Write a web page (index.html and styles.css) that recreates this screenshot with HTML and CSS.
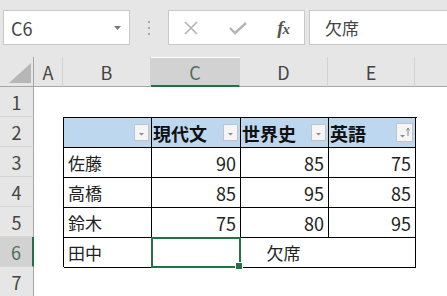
FILE: index.html
```html
<!DOCTYPE html>
<html lang="ja">
<head>
  <meta charset="UTF-8" />
  <meta name="viewport" content="width=device-width, initial-scale=1.0">
  <title>成績表</title>
  <link rel="stylesheet" href="styles.css">
</head>
<body>
  <div class="formula-bar">
    <div class="name-box">
      <span>C6</span>
      <svg class="caret" width="7" height="4" viewBox="0 0 7 4"><path d="M0 0h7L3.5 4z" fill="#7a7a7a"/></svg>
    </div>
    <div class="grip"><i></i><i></i><i></i></div>
    <div class="fx-buttons">
      <svg width="16" height="16" viewBox="0 0 16 16"><path d="M2 2l12 12M14 2L2 14" stroke="#b4b4b4" stroke-width="1.6" fill="none"/></svg>
      <svg width="18" height="16" viewBox="0 0 18 16"><path d="M1 8l5 5L17 3" stroke="#b4b4b4" stroke-width="2.4" fill="none"/></svg>
      <span class="fx">f<small>x</small></span>
    </div>
    <div class="formula-input">欠席</div>
  </div>

  <div class="sheet">
    <div class="corner"><div class="tri"></div></div>
    <div class="col-head">A</div>
    <div class="col-head">B</div>
    <div class="col-head active">C</div>
    <div class="col-head">D</div>
    <div class="col-head">E</div>
    <div class="col-head blank"></div>

    <div class="row-head">1</div>
    <div class="row-head">2</div>
    <div class="row-head">3</div>
    <div class="row-head">4</div>
    <div class="row-head">5</div>
    <div class="row-head active">6</div>
    <div class="row-head">7</div>

    <div class="scores">
      <div class="cell th"><span></span><span class="filter"><svg width="15" height="17" viewBox="0 0 15 17"><path d="M5 9h5l-2.5 2.5z" fill="#8a8a8a"/></svg></span></div>
      <div class="cell th"><span>現代文</span><span class="filter"><svg width="15" height="17" viewBox="0 0 15 17"><path d="M5 9h5l-2.5 2.5z" fill="#8a8a8a"/></svg></span></div>
      <div class="cell th"><span>世界史</span><span class="filter"><svg width="15" height="17" viewBox="0 0 15 17"><path d="M5 9h5l-2.5 2.5z" fill="#8a8a8a"/></svg></span></div>
      <div class="cell th"><span>英語</span><span class="filter sorted"><svg width="17" height="19" viewBox="0 0 17 19"><path d="M4 12h5l-2.5 2.5z" fill="#8a8a8a"/><path d="M12 13V5M10.5 7.5L12 5l1.5 2.5" stroke="#8a8a8a" stroke-width="1" fill="none"/></svg></span></div>

      <div class="cell">佐藤</div>
      <div class="cell num">90</div>
      <div class="cell num">85</div>
      <div class="cell num">75</div>

      <div class="cell">高橋</div>
      <div class="cell num">85</div>
      <div class="cell num">95</div>
      <div class="cell num">85</div>

      <div class="cell">鈴木</div>
      <div class="cell num">75</div>
      <div class="cell num">80</div>
      <div class="cell num">95</div>

      <div class="cell">田中</div>
      <div class="cell across">
        欠席
        <div class="selection"><div class="handle"></div></div>
      </div>
    </div>
  </div>
</body>
</html>
```

FILE: styles.css
```css
body {
  margin: 0;
  width: 447px;
  height: 296px;
  overflow: hidden;
  background: #ffffff;
  font-family: "Noto Sans CJK JP", "Noto Sans", sans-serif;
  color: #222;
}

/* formula bar */
.formula-bar {
  height: 57px;
  box-sizing: border-box;
  background: #e6e6e6;
  display: flex;
  align-items: flex-start;
  padding: 10px 0 0 3px;
}

.name-box,
.fx-buttons,
.formula-input {
  height: 35px;
  box-sizing: border-box;
  background: #fff;
  border: 1px solid #c8c8c8;
  display: flex;
  align-items: center;
}

.name-box {
  width: 127px;
  padding: 0 8px 0 7px;
  justify-content: space-between;
  font-size: 18px;
  color: #444;
}

.grip {
  width: 38px;
  height: 35px;
  display: flex;
  flex-direction: column;
  align-items: center;
  justify-content: center;
  gap: 4px;
}

.grip i {
  width: 2px;
  height: 2px;
  background: #a8a8a8;
}

.fx-buttons {
  width: 137px;
  padding: 0 15px 0 14px;
  justify-content: space-between;
}

.fx {
  font-family: "Liberation Serif", serif;
  font-style: italic;
  font-weight: bold;
  font-size: 19px;
  color: #555;
  letter-spacing: -1px;
}

.fx small {
  font-size: 15px;
}

.formula-input {
  flex: 1;
  margin-left: 4px;
  margin-right: -2px;
  padding-left: 15px;
  font-size: 17px;
  color: #444;
}

/* sheet grid */
.sheet {
  display: grid;
  grid-template-columns: 34px 29px 88px 89px 88px 87px 1fr;
  grid-template-rows: repeat(8, 30px);
}

.corner {
  background: #e6e6e6;
  border-right: 1px solid #a6a6a6;
  border-bottom: 1px solid #a6a6a6;
  display: flex;
  justify-content: flex-end;
  align-items: flex-end;
  padding: 0 2px 3px 0;
}

.tri {
  width: 22px;
  height: 20px;
  background: #b6b6b6;
  clip-path: polygon(100% 0, 100% 100%, 0 100%);
}

.col-head {
  background: #e6e6e6;
  border-right: 1px solid #d2d2d2;
  border-bottom: 1px solid #a6a6a6;
  display: flex;
  align-items: center;
  justify-content: center;
  font-size: 18px;
  color: #444;
}

.col-head.active {
  background: #d2d2d2;
  border-bottom: 2px solid #217346;
  color: #4e6e5c;
  margin-top: 1px;
}

.col-head.blank {
  border-right: none;
}

.row-head {
  grid-column: 1;
  background: #e6e6e6;
  border-right: 1px solid #a6a6a6;
  border-bottom: 1px solid #d4d4d4;
  display: flex;
  align-items: center;
  justify-content: center;
  font-size: 18px;
  color: #444;
}

.row-head.active {
  background: #d2d2d2;
  border-right: 2px solid #217346;
  color: #4e6e5c;
}

/* table B2:E6 */
.scores {
  grid-column: 3 / 7;
  grid-row: 3 / 8;
  width: 353px;
  display: grid;
  grid-template-columns: 88px 89px 88px 87px;
  grid-template-rows: repeat(5, 30px);
  border-left: 1px solid #000;
  border-top: 1px solid #000;
}

.cell {
  border-right: 1px solid #000;
  border-bottom: 1px solid #000;
  display: flex;
  align-items: center;
  padding: 0 4px;
  font-size: 17px;
  color: #222;
}

.cell.th {
  background: #bdd7ee;
  font-weight: bold;
  font-size: 18px;
  color: #111;
  justify-content: space-between;
  padding: 0 2px 0 1px;
}

.cell.num {
  justify-content: flex-end;
  font-size: 18px;
}

.filter {
  width: 15px;
  height: 17px;
  box-sizing: border-box;
  border: 1px solid #c3c3c3;
  background: #f5f5f5;
  display: flex;
}

.filter svg {
  margin: -1px;
}

.filter.sorted {
  width: 17px;
  height: 19px;
}

.cell.across {
  grid-column: 2 / 5;
  justify-content: center;
  position: relative;
}

.selection {
  position: absolute;
  left: -1px;
  top: -1px;
  width: 90px;
  height: 31px;
  box-sizing: border-box;
  border: 2px solid #217346;
}

.handle {
  position: absolute;
  right: -4px;
  bottom: -4px;
  width: 6px;
  height: 6px;
  background: #217346;
  border: 1px solid #fff;
}
```
